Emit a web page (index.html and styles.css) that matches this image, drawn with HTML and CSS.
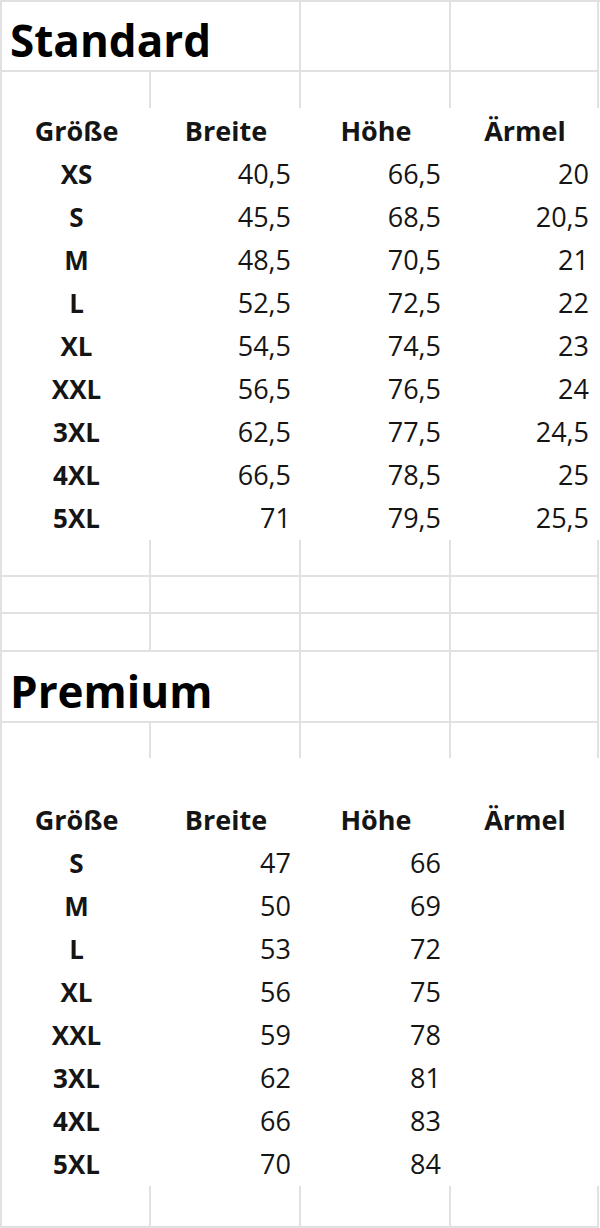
FILE: index.html
```html
<!DOCTYPE html>
<html lang="de">
<head>
<meta charset="utf-8">
<title>Größentabelle</title>
<link rel="stylesheet" href="styles.css">
</head>
<body>
<div class="sheet">
  <div class="row title-row">
    <div class="cell span2"><span class="title">Standard</span></div>
    <div class="cell"></div>
    <div class="cell last"></div>
  </div>
  <div class="row gap-row open">
    <div class="cell"></div><div class="cell"></div><div class="cell"></div><div class="cell last"></div>
  </div>

  <div class="table std">
    <div class="th">Größe</div><div class="th">Breite</div><div class="th">Höhe</div><div class="th">Ärmel</div>
    <div class="sz">XS</div><div class="num">40,5</div><div class="num">66,5</div><div class="num">20</div>
    <div class="sz">S</div><div class="num">45,5</div><div class="num">68,5</div><div class="num">20,5</div>
    <div class="sz">M</div><div class="num">48,5</div><div class="num">70,5</div><div class="num">21</div>
    <div class="sz">L</div><div class="num">52,5</div><div class="num">72,5</div><div class="num">22</div>
    <div class="sz">XL</div><div class="num">54,5</div><div class="num">74,5</div><div class="num">23</div>
    <div class="sz">XXL</div><div class="num">56,5</div><div class="num">76,5</div><div class="num">24</div>
    <div class="sz">3XL</div><div class="num">62,5</div><div class="num">77,5</div><div class="num">24,5</div>
    <div class="sz">4XL</div><div class="num">66,5</div><div class="num">78,5</div><div class="num">25</div>
    <div class="sz">5XL</div><div class="num">71</div><div class="num">79,5</div><div class="num">25,5</div>
  </div>

  <div class="row h37">
    <div class="cell"></div><div class="cell"></div><div class="cell"></div><div class="cell last"></div>
  </div>
  <div class="row h37">
    <div class="cell"></div><div class="cell"></div><div class="cell"></div><div class="cell last"></div>
  </div>
  <div class="row h38">
    <div class="cell"></div><div class="cell"></div><div class="cell"></div><div class="cell last"></div>
  </div>

  <div class="row title-row prem">
    <div class="cell span2"><span class="title">Premium</span></div>
    <div class="cell"></div>
    <div class="cell last"></div>
  </div>
  <div class="row gap-row2 open">
    <div class="cell"></div><div class="cell"></div><div class="cell"></div><div class="cell last"></div>
  </div>

  <div class="table prm">
    <div class="th">Größe</div><div class="th">Breite</div><div class="th">Höhe</div><div class="th">Ärmel</div>
    <div class="sz">S</div><div class="num">47</div><div class="num">66</div><div class="num"></div>
    <div class="sz">M</div><div class="num">50</div><div class="num">69</div><div class="num"></div>
    <div class="sz">L</div><div class="num">53</div><div class="num">72</div><div class="num"></div>
    <div class="sz">XL</div><div class="num">56</div><div class="num">75</div><div class="num"></div>
    <div class="sz">XXL</div><div class="num">59</div><div class="num">78</div><div class="num"></div>
    <div class="sz">3XL</div><div class="num">62</div><div class="num">81</div><div class="num"></div>
    <div class="sz">4XL</div><div class="num">66</div><div class="num">83</div><div class="num"></div>
    <div class="sz">5XL</div><div class="num">70</div><div class="num">84</div><div class="num"></div>
  </div>

  <div class="row end-row">
    <div class="cell"></div><div class="cell"></div><div class="cell"></div><div class="cell last"></div>
  </div>
</div>
</body>
</html>
```

FILE: styles.css
```css
:root {
  --grid: #e1e1e1;
  --ink: #151515;
}

html, body {
  margin: 0;
  padding: 0;
  background: #ffffff;
}

body {
  font-family: "Open Sans", "Noto Sans", "DejaVu Sans", sans-serif;
  color: var(--ink);
}

.sheet {
  width: 600px;
  height: 1228px;
  box-sizing: border-box;
  border-top: 2px solid var(--grid);
  border-left: 2px solid var(--grid);
  display: flex;
  flex-direction: column;
  overflow: hidden;
}

.row {
  display: grid;
  grid-template-columns: 149px 150px 150px 148px;
  box-sizing: border-box;
}

.cell {
  border-right: 2px solid var(--grid);
  border-bottom: 2px solid var(--grid);
  box-sizing: border-box;
}

.row.open .cell {
  border-bottom: none;
}

.span2 {
  grid-column: span 2;
  display: flex;
  align-items: flex-end;
  padding-left: 8px;
  padding-bottom: 0;
}

.title {
  font-weight: 700;
  font-size: 44px;
  line-height: 60px;
  color: #000;
}

.title-row { height: 70px; }
.title-row.prem { height: 71px; }
.gap-row { height: 36px; }
.gap-row2 { height: 35px; }
.h37 { height: 37px; }
.h38 { height: 38px; }
.end-row { height: 42px; }

.table {
  display: grid;
  grid-template-columns: 149px 150px 150px 148px;
  grid-auto-rows: 43px;
  align-items: center;
  background: #fff;
  width: 598px;
  box-sizing: border-box;
}

.table.std {
  height: 432px;
  padding-top: 1px;
}

.table.prm {
  height: 428px;
  padding-top: 40px;
}

.th {
  text-align: center;
  font-weight: 700;
  font-size: 27px;
}

.sz {
  text-align: center;
  font-weight: 700;
  font-size: 26px;
}

.num {
  text-align: right;
  font-size: 27px;
  padding-right: 10px;
}
```
